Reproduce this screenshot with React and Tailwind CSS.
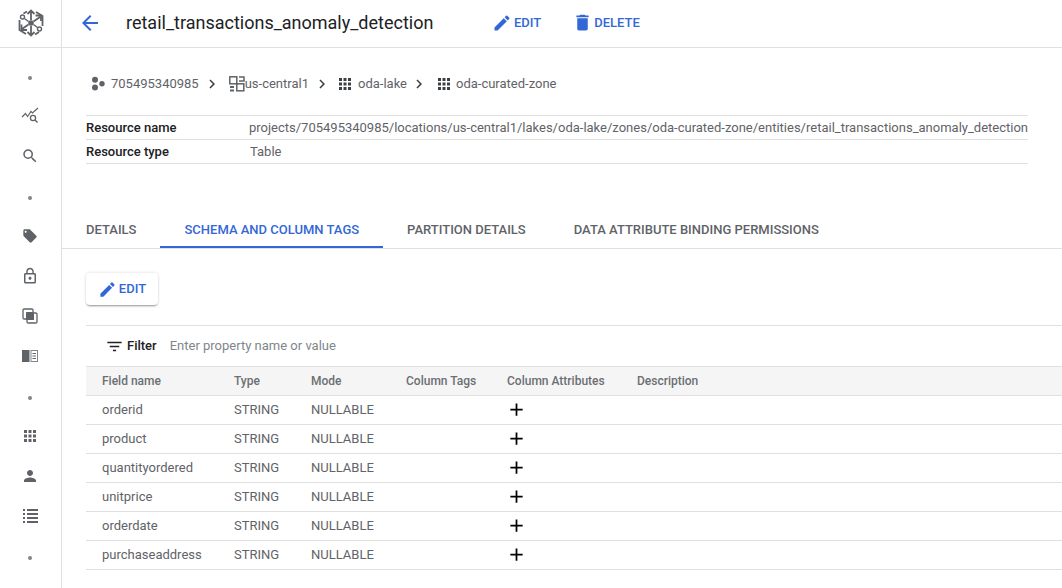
import React from 'react';

const Mi = ({ d, size = 18, className = '' }) => (
  <svg width={size} height={size} viewBox="0 0 24 24" fill="currentColor" className={className}>
    <path d={d} />
  </svg>
);

const paths = {
  back: 'M20 11H7.83l5.59-5.59L12 4l-8 8 8 8 1.41-1.41L7.83 13H20v-2z',
  pencil: 'M3 17.25V21h3.75L17.81 9.94l-3.75-3.75L3 17.25zM20.71 7.04a1 1 0 0 0 0-1.41l-2.34-2.34a1 1 0 0 0-1.41 0l-1.83 1.83 3.75 3.75 1.83-1.83z',
  trash: 'M6 19c0 1.1.9 2 2 2h8c1.1 0 2-.9 2-2V7H6v12zM19 4h-3.5l-1-1h-5l-1 1H5v2h14V4z',
  chevron: 'M10 6 8.59 7.41 13.17 12l-4.58 4.59L10 18l6-6z',
  grid: 'M4 8h4V4H4v4zm6 12h4v-4h-4v4zm-6 0h4v-4H4v4zm0-6h4v-4H4v4zm6 0h4v-4h-4v4zm6-10v4h4V4h-4zm-6 4h4V4h-4v4zm6 6h4v-4h-4v4zm0 6h4v-4h-4v4z',
  search: 'M15.5 14h-.79l-.28-.27A6.47 6.47 0 0 0 16 9.5 6.5 6.5 0 1 0 9.5 16c1.61 0 3.09-.59 4.23-1.57l.27.28v.79l5 4.99L20.49 19l-4.99-5zm-6 0C7.01 14 5 11.99 5 9.5S7.01 5 9.5 5 14 7.01 14 9.5 11.99 14 9.5 14z',
  tag: 'M21.41 11.58l-9-9C12.05 2.22 11.55 2 11 2H4c-1.1 0-2 .9-2 2v7c0 .55.22 1.05.59 1.42l9 9c.36.36.86.58 1.41.58.55 0 1.05-.22 1.41-.59l7-7c.37-.36.59-.86.59-1.41 0-.55-.23-1.06-.59-1.42zM5.500 7C4.670 7 4 6.330 4 5.500S4.670 4 5.500 4 7 4.670 7 5.500 6.330 7 5.500 7z',
  lock: 'M12 17c1.1 0 2-.9 2-2s-.9-2-2-2-2 .9-2 2 .9 2 2 2zm6-9h-1V6c0-2.76-2.24-5-5-5S7 3.24 7 6v2H6c-1.1 0-2 .9-2 2v10c0 1.1.9 2 2 2h12c1.1 0 2-.9 2-2V10c0-1.1-.9-2-2-2zM8.9 6c0-1.71 1.39-3.1 3.1-3.1s3.1 1.39 3.1 3.1v2H8.9V6zM18 20H6V10h12v10z',
  person: 'M12 12c2.21 0 4-1.79 4-4s-1.79-4-4-4-4 1.79-4 4 1.79 4 4 4zm0 2c-2.67 0-8 1.34-8 4v2h16v-2c0-2.66-5.33-4-8-4z',
  filter: 'M10 18h4v-2h-4v2zM3 6v2h18V6H3zm3 7h12v-2H6v2z',
  plus: 'M19 13h-6v6h-2v-6H5v-2h6V5h2v6h6v2z',
};

const Logo = () => (
  <svg width="26" height="28" viewBox="0 0 26 28" fill="none" stroke="#5f6368" strokeWidth="1.800">
    {/* hexagon outline, broken where the arrows and nodes sit */}
    <path d="M1.500 11v10l6.500 4M24.500 17V7L18 3M9 2.500 5.500 4.500M21 23l-4 2.500" />
    <path d="M13 11V2M9.500 5 13 1.500 16.500 5M13 17v9M9.500 23l3.500 3.500 3.500-3.500" />
    <path d="M10.500 15.500 4 20M3.500 15.500v5.500h5.500M15.500 12.500 22 8M17.500 6.500H23V12" />
    <path d="M10.500 12.500 6.500 9.500M15.500 15.500l4 3" strokeWidth="1.400" />
    <circle cx="13" cy="14" r="2.800" fill="#5f6368" stroke="none" />
    <circle cx="4.500" cy="8" r="2" fill="#fff" strokeWidth="1.400" />
    <circle cx="21.500" cy="20" r="2" fill="#fff" strokeWidth="1.400" />
  </svg>
);

const Dot = () => <span className="block h-[4px] w-[4px] rounded-full bg-[#80868b]" />;

const Trend = () => (
  <svg width="18" height="18" viewBox="0 0 18 18" fill="none" stroke="#5f6368" strokeWidth="1.200">
    <path d="M1 10 4.500 6.500l2 3L10 4.500l1.500 1.500L17 1" />
    <circle cx="12" cy="11" r="2.600" strokeWidth="1.300" />
    <path d="m14 13 2.500 2.500" strokeWidth="1.400" />
  </svg>
);

const Copy = () => (
  <svg width="16" height="16" viewBox="0 0 16 16" fill="none" stroke="#5f6368" strokeWidth="1.300">
    <path d="M4 11H2.200A1.200 1.200 0 0 1 1 9.800V2.200A1.200 1.200 0 0 1 2.200 1h7.600A1.200 1.200 0 0 1 11 2.200V4" />
    <path d="M12 5h1.800A1.200 1.200 0 0 1 15 6.200v7.600a1.200 1.200 0 0 1-1.200 1.200H6.200A1.200 1.200 0 0 1 5 13.800V12" />
    <rect x="4" y="4" width="8" height="8" rx="0.500" fill="#5f6368" stroke="none" />
  </svg>
);

const Book = () => (
  <svg width="16" height="12" viewBox="0 0 16 12">
    <rect x="0" y="0" width="7.500" height="12" fill="#5f6368" />
    <rect x="8.500" y="0" width="7.500" height="12" fill="#80868b" />
    <rect x="9.500" y="1" width="5.500" height="10" fill="#fff" />
    <path d="M10.500 3.500h3.500M10.500 6h3.500M10.500 8.500h3.500" stroke="#5f6368" strokeWidth="1" />
  </svg>
);

// four rows, the material list icon only has three
const RailList = () => (
  <svg width="15" height="14" viewBox="0 0 15 14" fill="#5f6368">
    <path d="M0 0h2v2H0zM4 0h11v2H4zM0 4h2v2H0zM4 4h11v2H4zM0 8h2v2H0zM4 8h11v2H4zM0 12h2v2H0zM4 12h11v2H4z" />
  </svg>
);

const ProjectDots = () => (
  <svg width="16" height="16" viewBox="0 0 16 16" fill="#5f6368">
    <circle cx="5" cy="3.800" r="3" />
    <circle cx="5" cy="11.500" r="3" />
    <circle cx="12" cy="7.800" r="2.700" />
  </svg>
);

const Region = () => (
  <svg width="16" height="16" viewBox="0 0 16 16" fill="none" stroke="#5f6368" strokeWidth="1.500">
    <rect x="0.800" y="0.800" width="7" height="7" />
    <rect x="7.800" y="7.800" width="7" height="7" />
    <path d="M10 1h5v4h-5" />
    <path d="M1 10h4v2H1zM1 13.500h4V15.500H1z" fill="#5f6368" stroke="none" />
  </svg>
);

const Rail = ({ children }) => <div className="pb-[4px]">{children}</div>;

const railItems = [
  <Dot />,
  <Rail><Trend /></Rail>,
  <Rail><Mi d={paths.search} size={18} className="text-[#5f6368]" /></Rail>,
  <Dot />,
  <Rail><Mi d={paths.tag} size={16} className="text-[#5f6368]" /></Rail>,
  <Rail><Mi d={paths.lock} size={18} className="text-[#5f6368]" /></Rail>,
  <Rail><Copy /></Rail>,
  <Rail><Book /></Rail>,
  <Dot />,
  <Rail><Mi d={paths.grid} size={18} className="text-[#5f6368]" /></Rail>,
  <Rail><Mi d={paths.person} size={18} className="text-[#5f6368]" /></Rail>,
  <Rail><RailList /></Rail>,
  <Dot />,
];

const tabs = ['DETAILS', 'SCHEMA AND COLUMN TAGS', 'PARTITION DETAILS', 'DATA ATTRIBUTE BINDING PERMISSIONS'];

const columns = [
  ['Field name', 'w-[132px]'],
  ['Type', 'w-[77px]'],
  ['Mode', 'w-[95px]'],
  ['Column Tags', 'w-[101px]'],
  ['Column Attributes', 'w-[130px]'],
  ['Description', ''],
];

const fields = ['orderid', 'product', 'quantityordered', 'unitprice', 'orderdate', 'purchaseaddress'];

const App = () => {
  return (
    <div className="flex h-[588px] w-[1062px] overflow-hidden bg-white font-['Roboto',sans-serif] text-[#3c4043]">
      {/* Left rail */}
      <div className="flex w-[62px] shrink-0 flex-col border-r border-[#e0e0e0]">
        <div className="flex h-[48px] shrink-0 items-center justify-center border-b border-[#e0e0e0] pb-[2px]">
          <Logo />
        </div>
        <div className="flex flex-col pt-[10px]">
          {railItems.map((item, i) => (
            <div key={i} className="flex h-[40px] items-center justify-center pr-[1px]">
              {item}
            </div>
          ))}
        </div>
      </div>

      <div className="min-w-0 flex-1">
        {/* Header */}
        <div className="flex h-[48px] items-center border-b border-[#e0e0e0] pb-[2px]">
          <Mi d={paths.back} size={24} className="ml-[16px] text-[#3367d6]" />
          <h1 className="ml-[24px] w-[366px] text-[18px] font-normal whitespace-nowrap text-[#202124]">
            retail_transactions_anomaly_detection
          </h1>
          <button className="flex items-center gap-[2px] text-[13px] font-medium text-[#3367d6]">
            <Mi d={paths.pencil} size={20} />
            EDIT
          </button>
          <button className="ml-[31px] flex items-center gap-[1px] text-[13px] font-medium text-[#3367d6]">
            <Mi d={paths.trash} size={21} />
            DELETE
          </button>
        </div>

        {/* Breadcrumbs */}
        <div className="mt-[27px] ml-[28px] flex h-[18px] items-center text-[13px] text-[#5f6368]">
          <ProjectDots />
          <span className="ml-[5px]">705495340985</span>
          <Mi d={paths.chevron} size={18} className="ml-[4px] text-[#3c4043]" />
          <span className="ml-[8px]"><Region /></span>
          <span>us-central1</span>
          <Mi d={paths.chevron} size={18} className="ml-[4px] text-[#3c4043]" />
          <Mi d={paths.grid} size={18} className="ml-[5px] text-[#3c4043]" />
          <span className="ml-[4px]">oda-lake</span>
          <Mi d={paths.chevron} size={18} className="ml-[3px] text-[#3c4043]" />
          <Mi d={paths.grid} size={18} className="ml-[7px] text-[#3c4043]" />
          <span className="ml-[3px]">oda-curated-zone</span>
        </div>

        {/* Resource info */}
        <div className="mt-[22px] ml-[24px] w-[942px] border-t border-[#e0e0e0] text-[13px]">
          <div className="flex h-[24px] items-center border-b border-[#e0e0e0]">
            <span className="w-[164px] font-medium text-[#202124]">Resource name</span>
            <span className="whitespace-nowrap text-[#5f6368]">
              projects/705495340985/locations/us-central1/lakes/oda-lake/zones/oda-curated-zone/entities/retail_transactions_anomaly_detection
            </span>
          </div>
          <div className="flex h-[24px] items-center border-b border-[#e0e0e0]">
            <span className="w-[164px] font-medium text-[#202124]">Resource type</span>
            <span className="text-[#5f6368]">Table</span>
          </div>
        </div>

        {/* Tabs */}
        <div className="mt-[46px] flex h-[39px] border-b border-[#e0e0e0] text-[13px] font-medium">
          {tabs.map((t, i) => (
            <div
              key={t}
              className={`flex items-center px-[24px] pt-[4px] whitespace-nowrap ${i === 1 ? 'border-b-2 border-[#3367d6] text-[#3367d6]' : 'border-b-2 border-transparent text-[#5f6368]'}`}
            >
              {t}
            </div>
          ))}
        </div>

        {/* Edit button */}
        <button className="mt-[24px] ml-[24px] flex h-[32px] w-[72px] items-center justify-center gap-[2px] rounded-[4px] bg-white text-[13px] font-medium text-[#3367d6] shadow-[0_2px_2px_-1px_rgba(60,64,67,0.5),0_0_3px_rgba(60,64,67,0.2)]">
          <Mi d={paths.pencil} size={19} />
          EDIT
        </button>

        {/* Filter bar */}
        <div className="mt-[20px] ml-[24px] flex h-[41px] items-center border-t border-[#e0e0e0] pl-[19px] text-[13px]">
          <Mi d={paths.filter} size={19} className="text-[#202124]" />
          <span className="ml-[3px] font-medium text-[#202124]">Filter</span>
          <span className="ml-[13px] text-[#80868b]">Enter property name or value</span>
        </div>

        {/* Schema table */}
        <div className="ml-[24px]">
          <div className="flex h-[30px] items-center border-y border-[#e0e0e0] bg-[#f5f5f5] text-[12px] font-medium text-[#6b6f73]">
            {columns.map(([name, w]) => (
              <div key={name} className={`pl-[16px] whitespace-nowrap ${w}`}>{name}</div>
            ))}
          </div>
          {fields.map((f) => (
            <div key={f} className="flex h-[29px] items-center border-b border-[#e0e0e0] text-[13px] text-[#5f6368]">
              <div className="w-[132px] pl-[16px]">{f}</div>
              <div className="w-[77px] pl-[16px]">STRING</div>
              <div className="w-[95px] pl-[16px]">NULLABLE</div>
              <div className="w-[101px]" />
              <div className="w-[130px] pb-[2px] pl-[15px]">
                <Mi d={paths.plus} size={21} className="text-black" />
              </div>
            </div>
          ))}
        </div>
      </div>
    </div>
  );
};

export default App;
